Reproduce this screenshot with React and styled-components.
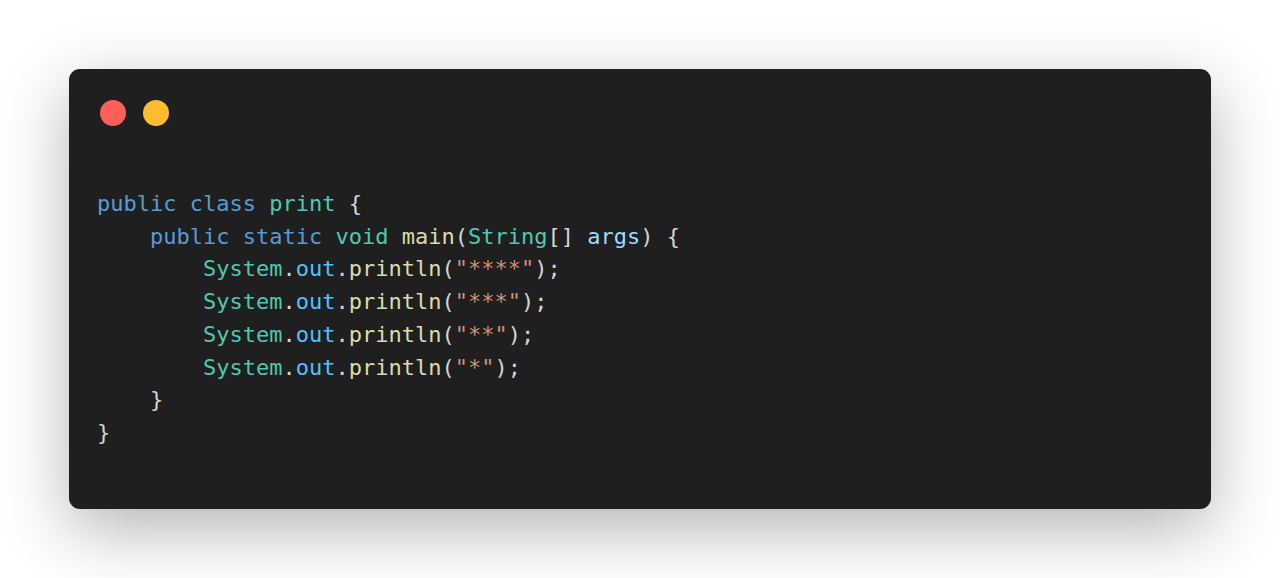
import React from 'react'
import styled, { createGlobalStyle } from 'styled-components';

const Global = createGlobalStyle`
body {
  margin: 0;
  background: #fff;
}
`;

const Page = styled.div`
padding: 69px 69px;
height: 578px;
box-sizing: border-box;
`;

const Window = styled.div`
background: #1f1f1f;
border-radius: 11px;
height: 440px;
box-sizing: border-box;
padding: 31px 28px 0 28px;
box-shadow: 0 20px 68px rgba(0, 0, 0, 0.3);
`;

const Dots = styled.div`
display: flex;
gap: 17px;
padding-left: 3px;
`;

const Dot = styled.span`
width: 26px;
height: 26px;
border-radius: 50%;
background: ${p => p.color};
`;

const Code = styled.pre`
margin: 62px 0 0 0;
font-family: "DejaVu Sans Mono", "Liberation Mono", monospace;
font-size: 22px;
line-height: 32.7px;
color: #d4d4d4;
`;

const Kw = styled.span`color: #569cd6;`;
const Type = styled.span`color: #4ec9b0;`;
const Fn = styled.span`color: #dcdcaa;`;
const Var = styled.span`color: #9cdcfe;`;
const Prop = styled.span`color: #4fc1ff;`;
const Str = styled.span`color: #ce9178;`;

const Print = ({ stars }) => (
    <>
        {'        '}<Type>System</Type>.<Prop>out</Prop>.<Fn>println</Fn>(<Str>"{stars}"</Str>);{'\n'}
    </>
)

const App = () => {
    return (
        <Page>
            <Global />
            <Window>
                <Dots>
                    <Dot color="#fe5f57" />
                    <Dot color="#febc2e" />
                </Dots>
                <Code>
                    <Kw>public</Kw> <Kw>class</Kw> <Type>print</Type> {'{'}{'\n'}
                    {'    '}<Kw>public</Kw> <Kw>static</Kw> <Type>void</Type> <Fn>main</Fn>(<Type>String</Type>[] <Var>args</Var>) {'{'}{'\n'}
                    <Print stars="****" />
                    <Print stars="***" />
                    <Print stars="**" />
                    <Print stars="*" />
                    {'    }'}{'\n'}
                    {'}'}
                </Code>
            </Window>
        </Page>
    )
}

export default App
